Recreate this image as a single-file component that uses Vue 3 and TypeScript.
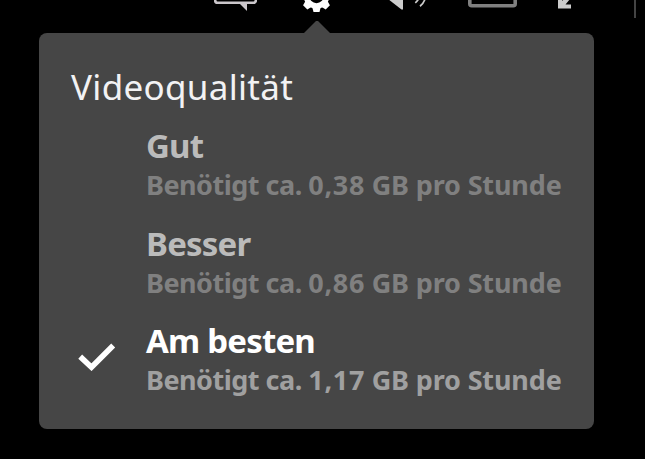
<script setup lang="ts">
interface QualityOption {
  id: string
  label: string
  amount: string
}

const options: QualityOption[] = [
  { id: 'good', label: 'Gut', amount: '0,38' },
  { id: 'better', label: 'Besser', amount: '0,86' },
  { id: 'best', label: 'Am besten', amount: '1,17' },
]
const selected = 'best'
const teeth = [0, 45, 90, 135, 180, 225, 270, 315]
</script>

<template>
  <main class="player">
    <header class="toolbar">
      <svg class="chat" width="43" height="13" viewBox="0 0 43 13">
        <path d="M1.2-8V.5Q1.2 2.8 3.5 2.8H39.5Q41.8 2.8 41.8.5V-8" fill="none" stroke="#cbc7cb" stroke-width="2.6" />
        <path d="M25.5 3.5H33V11Z" fill="#cbc7cb" />
      </svg>
      <svg class="gear" width="33" height="13" viewBox="0 0 33 13">
        <g transform="translate(16.5 -4)">
          <circle r="10" fill="none" stroke="#fff" stroke-width="5.6" />
          <path v-for="angle in teeth" :key="angle" :transform="`rotate(${angle})`" d="M-4.3 11L-3 16H3L4.3 11Z" fill="#fff" />
        </g>
      </svg>
      <svg class="speaker" width="42" height="13" viewBox="0 0 42 13">
        <path d="M3-1H18V9.5H16.5Z" fill="#ccc" />
        <path d="M30.3 2.8Q32.5 1 33.5-1M35 6.2Q38.6 3.5 40-1" fill="none" stroke="#ccc" stroke-width="1.7" />
      </svg>
      <svg class="screen" width="49" height="13" viewBox="0 0 49 13">
        <path d="M1.8-5V3.7Q1.8 5.7 3.8 5.7H45.2Q47.2 5.7 47.2 3.7V-5" fill="none" stroke="#808080" stroke-width="3.6" />
      </svg>
      <svg class="shrink" width="13" height="13" viewBox="0 0 13 13">
        <path d="M0-1H4.2V1L6.2-1H12L7.5 4.6H13V8.6H0Z" fill="#ccc" />
      </svg>
      <i class="divider" />
    </header>
    <section class="panel">
      <svg class="pointer" width="26" height="13" viewBox="0 0 26 13">
        <path d="M0 13L12 1H14L26 13Z" fill="#464646" />
      </svg>
      <h1>Videoqualität</h1>
      <ul>
        <li v-for="option in options" :key="option.id" :class="{ active: option.id === selected }">
          <span class="mark">
            <svg v-if="option.id === selected" width="38" height="30" viewBox="0 0 38 30">
              <path d="M2.2 15.6L13.5 26.2L35.2 4.5" fill="none" stroke="#fff" stroke-width="5.6" />
            </svg>
          </span>
          <div>
            <strong>{{ option.label }}</strong>
            <small>Benötigt ca. <span class="amount">{{ option.amount }}</span> <span class="unit">GB pro Stunde</span></small>
          </div>
        </li>
      </ul>
    </section>
  </main>
</template>

<style>
body {
  margin: 0;
  background: #000;
}
</style>

<style scoped>
.player {
  box-sizing: border-box;
  width: 645px;
  height: 459px;
  overflow: hidden;
  background: #000;
  font-family: "Noto Sans", "Open Sans", sans-serif;
}
.toolbar {
  display: flex;
  align-items: flex-start;
  height: 33px;
  padding-left: 214px;
}
.toolbar svg {
  flex: none;
}
.gear {
  margin-left: 43px;
}
.speaker {
  margin-left: 52px;
}
.screen {
  margin-left: 41px;
}
.shrink {
  margin-left: 41px;
}
.divider {
  width: 2px;
  height: 18px;
  margin-left: 63px;
  background: #444;
}
.panel {
  position: relative;
  box-sizing: border-box;
  width: 555px;
  height: 396px;
  margin-left: 39px;
  padding: 30px 32px 0;
  border-radius: 8px;
  background: #464646;
}
.pointer {
  position: absolute;
  top: -13px;
  left: 264.5px;
}
h1 {
  margin: 0;
  color: #f2f2f4;
  font-size: 35px;
  font-weight: 400;
  line-height: 48px;
  letter-spacing: 0.3px;
  white-space: nowrap;
}
ul {
  margin: 15px 0 0;
  padding: 0;
  list-style: none;
}
li {
  display: flex;
  height: 97.5px;
  color: #bbb;
}
.mark {
  flex: none;
  width: 75px;
  padding: 20px 0 0 7px;
  box-sizing: border-box;
}
strong,
small {
  display: block;
  font-weight: 700;
  white-space: nowrap;
}
strong {
  font-size: 33px;
  line-height: 40px;
  letter-spacing: -0.8px;
}
small {
  color: #808080;
  font-size: 27px;
  line-height: 38px;
  letter-spacing: -0.5px;
}
.amount {
  letter-spacing: 0.7px;
}
.unit {
  letter-spacing: -0.15px;
}
.active {
  color: #fff;
}
.active small {
  color: #a0a0a0;
}
</style>
